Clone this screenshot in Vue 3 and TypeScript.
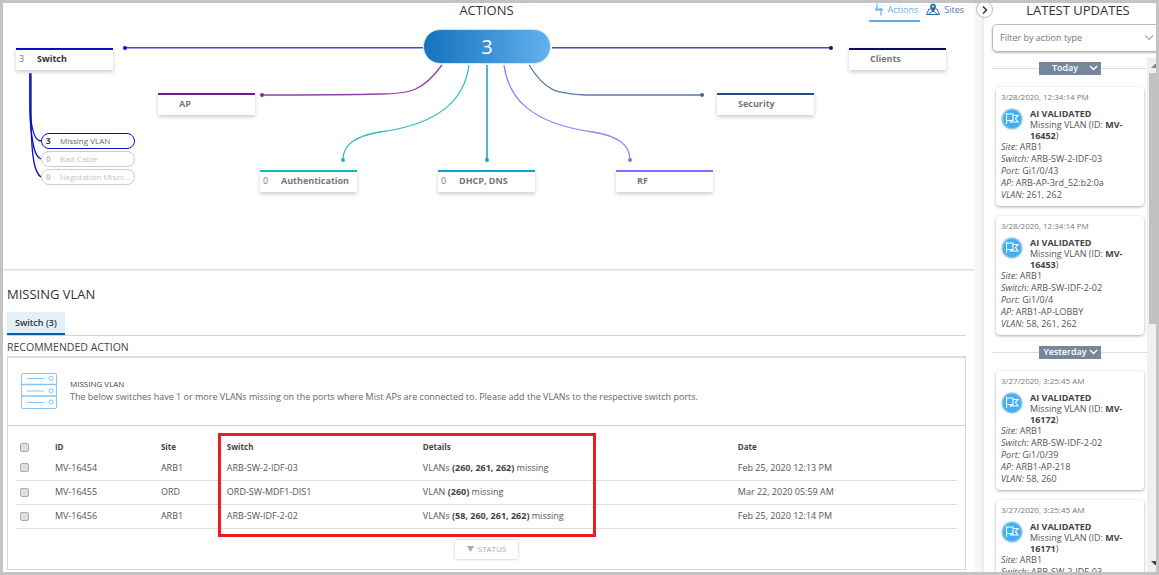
<script setup lang="ts">
import { ref } from 'vue'

interface DiagramNode {
  label: string
  count?: string
  x: number
  y: number
  color: string
  active?: boolean
}

interface SubIssue {
  label: string
  count: string
  y: number
  active?: boolean
}

interface Update {
  id: string
  time: string
  ticket: string
  site: string
  switchName: string
  port: string
  ap: string
  vlan: string
}

const CANVAS_WIDTH = 972

const nodes: DiagramNode[] = [
  { label: 'Switch', count: '3', x: 13, y: 45, color: '#0a10c0', active: true },
  { label: 'AP', x: 155, y: 90, color: '#6d1f8f' },
  { label: 'Authentication', count: '0', x: 257, y: 167, color: '#16b9b9' },
  { label: 'DHCP, DNS', count: '0', x: 435, y: 167, color: '#12a0c4' },
  { label: 'RF', x: 613, y: 167, color: '#7a74fb' },
  { label: 'Security', x: 714, y: 90, color: '#234f86' },
  { label: 'Clients', x: 846, y: 45, color: '#0b0b6e' },
]

const issues: SubIssue[] = [
  { label: 'Missing VLAN', count: '3', y: 130, active: true },
  { label: 'Bad Cable', count: '0', y: 148 },
  { label: 'Negotation Mism...', count: '0', y: 166 },
]

const place = (x: number, y: number) => ({ left: `${(x / CANVAS_WIDTH) * 100}%`, top: `${y}px` })

const columns = ['ID', 'Site', 'Switch', 'Details', 'Date']

const rows = [
  { id: 'MV-16454', site: 'ARB1', sw: 'ARB-SW-2-IDF-03', noun: 'VLANs', vlans: '(260, 261, 262)', date: 'Feb 25, 2020 12:13 PM' },
  { id: 'MV-16455', site: 'ORD', sw: 'ORD-SW-MDF1-DIS1', noun: 'VLAN', vlans: '(260)', date: 'Mar 22, 2020 05:59 AM' },
  { id: 'MV-16456', site: 'ARB1', sw: 'ARB-SW-IDF-2-02', noun: 'VLANs', vlans: '(58, 260, 261, 262)', date: 'Feb 25, 2020 12:14 PM' },
]

const days: { name: string; updates: Update[] }[] = [
  {
    name: 'Today',
    updates: [
      { id: 'a', time: '3/28/2020, 12:34:14 PM', ticket: 'MV-16452', site: 'ARB1', switchName: 'ARB-SW-2-IDF-03', port: 'Gi1/0/43', ap: 'ARB-AP-3rd_52:b2:0a', vlan: '261, 262' },
      { id: 'b', time: '3/28/2020, 12:34:14 PM', ticket: 'MV-16453', site: 'ARB1', switchName: 'ARB-SW-IDF-2-02', port: 'Gi1/0/4', ap: 'ARB1-AP-LOBBY', vlan: '58, 261, 262' },
    ],
  },
  {
    name: 'Yesterday',
    updates: [
      { id: 'c', time: '3/27/2020, 3:25:45 AM', ticket: 'MV-16172', site: 'ARB1', switchName: 'ARB-SW-IDF-2-02', port: 'Gi1/0/39', ap: 'ARB1-AP-218', vlan: '58, 260' },
      { id: 'd', time: '3/27/2020, 3:25:45 AM', ticket: 'MV-16171', site: 'ARB1', switchName: 'ARB-SW-2-IDF-03', port: 'Gi1/0/43', ap: 'ARB1-AP-218', vlan: '58, 260' },
    ],
  },
]

const picked = ref<string[]>([])
const filter = ref('')
</script>

<template>
  <div class="frame">
    <main class="main">
      <section class="diagram">
        <h1 class="title">ACTIONS</h1>
        <nav class="views">
          <a href="#actions" class="view current">
            <svg width="10" height="13" viewBox="0 0 10 13" fill="none" stroke="currentColor" stroke-width="1.200">
              <path d="M3 0.500V7.500M1 5.500L3 7.500L5 5.500M7 12.500V5.500M5 7.500L7 5.500L9 7.500" />
            </svg>
            Actions
          </a>
          <a href="#sites" class="view">
            <svg width="14" height="12" viewBox="0 0 14 12" fill="none" stroke="#1f6fb5" stroke-width="1">
              <path d="M4.500 6L3 6L0.500 11.500H13.500L11 6H9.500M2.500 11L7 8L11.500 11" />
              <path d="M7 9C5 6 4.500 5 4.500 3.500A2.500 2.500 0 0 1 9.500 3.500C9.500 5 9 6 7 9Z" fill="#1f6fb5" />
              <circle cx="7" cy="3.500" r="1" fill="#fff" stroke="none" />
            </svg>
            Sites
          </a>
        </nav>

        <svg class="wires" viewBox="0 0 972 264" preserveAspectRatio="none" fill="none" stroke-width="1.300">
          <path d="M122 44.800H420" stroke="#4247dc" stroke-width="1.600" />
          <path d="M549 44.800H828" stroke="#4d4ab0" stroke-width="1.600" />
          <path d="M439 62C420 88 407 91 377 91C340 92 300 92 259 92" stroke="#8a44a4" />
          <path d="M466 62C462 92 443 120 377 129C353 133 340 141 340 157" stroke="#2bbfbf" />
          <path d="M484 62V157" stroke="#12a0c4" stroke-width="1.500" />
          <path d="M501 62C505 92 524 120 590 129C614 133 627 141 627 157" stroke="#8a85fb" />
          <path d="M526 62C542 88 553 91 585 92H699" stroke="#5b7ba3" />
          <g stroke="#0a10c0">
            <path d="M27 70V104C28 126 31 138 38 138" />
            <path d="M27 70V114C29 142 32 154 38 156" />
            <path d="M28 70V122C29 158 32 170 38 174" />
          </g>
          <circle cx="122" cy="45" r="2" fill="#0a10c0" />
          <circle cx="828" cy="45" r="2" fill="#10106e" />
          <circle cx="259" cy="92" r="2" fill="#7a2f98" />
          <circle cx="340" cy="157" r="2" fill="#16b9b9" />
          <circle cx="484" cy="157" r="2" fill="#12a0c4" />
          <circle cx="627" cy="157" r="2" fill="#7a74fb" />
          <circle cx="699" cy="92" r="2" fill="#47658f" />
        </svg>

        <button class="total" type="button">3</button>

        <button
          v-for="node in nodes"
          :key="node.label"
          type="button"
          class="node"
          :class="{ active: node.active }"
          :style="{ ...place(node.x, node.y), borderTopColor: node.color }"
        >
          <span class="node-count">{{ node.count }}</span>
          <strong>{{ node.label }}</strong>
        </button>

        <button
          v-for="issue in issues"
          :key="issue.label"
          type="button"
          class="issue"
          :class="{ active: issue.active }"
          :style="place(38, issue.y)"
        >
          <strong class="issue-count">{{ issue.count }}</strong>
          <span>{{ issue.label }}</span>
        </button>
      </section>

      <section class="detail">
        <h2 class="subject">MISSING VLAN</h2>
        <div class="tabs">
          <button type="button" class="tab">Switch (3)</button>
        </div>
        <h3 class="caption">RECOMMENDED ACTION</h3>

        <div class="box">
          <div class="intro">
            <svg class="rack" width="36" height="36" viewBox="0 0 36 36" fill="none" stroke="#86c5f4" stroke-width="1">
              <rect x="0.500" y="0.500" width="35" height="35" rx="1" />
              <path d="M0 11.500H36M0 23H36" stroke-width="1.500" />
              <path d="M6 5.500H23M6 18H23M6 29.500H23" />
              <circle cx="30" cy="5.500" r="2" />
              <circle cx="30" cy="18" r="2" />
              <circle cx="30" cy="29" r="2" />
            </svg>
            <div>
              <h4 class="intro-title">MISSING VLAN</h4>
              <p class="intro-text">
                The below switches have 1 or more VLANs missing on the ports where Mist APs are connected to. Please add the VLANs to the respective switch ports.
              </p>
            </div>
          </div>

          <div class="table-wrap">
            <table>
              <colgroup>
                <col class="c-check" />
                <col class="c-id" />
                <col class="c-site" />
                <col class="c-switch" />
                <col class="c-details" />
                <col />
              </colgroup>
              <thead>
                <tr>
                  <th><input type="checkbox" aria-label="Select all" /></th>
                  <th v-for="c in columns" :key="c">{{ c }}</th>
                </tr>
              </thead>
              <tbody>
                <tr v-for="row in rows" :key="row.id">
                  <td><input v-model="picked" type="checkbox" :value="row.id" :aria-label="row.id" /></td>
                  <td>{{ row.id }}</td>
                  <td>{{ row.site }}</td>
                  <td>{{ row.sw }}</td>
                  <td>{{ row.noun }} <b>{{ row.vlans }}</b> missing</td>
                  <td>{{ row.date }}</td>
                </tr>
              </tbody>
            </table>
            <div class="highlight"></div>
          </div>

          <button type="button" class="status">
            <svg width="7" height="6" viewBox="0 0 7 6"><path d="M0 0H7L3.500 6Z" fill="#aaa" /></svg>
            STATUS
          </button>
        </div>
      </section>
    </main>

    <div class="splitter">
      <button type="button" class="collapse" aria-label="Collapse updates">
        <svg width="6" height="8" viewBox="0 0 6 8" fill="none" stroke="#333" stroke-width="1.500"><path d="M1 0.500L4.500 4L1 7.500" /></svg>
      </button>
    </div>

    <aside class="side">
      <h2 class="title">LATEST UPDATES</h2>
      <div class="filter">
        <select v-model="filter" aria-label="Filter by action type">
          <option value="">Filter by action type</option>
        </select>
        <svg width="10" height="6" viewBox="0 0 10 6" fill="none" stroke="#aaa" stroke-width="1.200"><path d="M1 0.500L5 4.500L9 0.500" /></svg>
      </div>

      <div class="feed">
        <div class="feed-list">
          <section v-for="day in days" :key="day.name" class="day">
            <div class="day-bar">
              <button type="button" class="day-name">
                <span>{{ day.name }}</span>
                <svg width="9" height="6" viewBox="0 0 9 6" fill="none" stroke="#fff" stroke-width="1.500"><path d="M1 1L4.500 4.500L8 1" /></svg>
              </button>
            </div>
            <article v-for="u in day.updates" :key="u.id" class="card">
              <time class="card-time">{{ u.time }}</time>
              <div class="card-head">
                <svg width="22" height="22" viewBox="0 0 22 22" fill="none">
                  <circle cx="11" cy="11" r="10" fill="#3fb0f5" stroke="#9fcbe2" stroke-width="1.500" />
                  <path d="M5.500 5V16M5.500 6H12V12.500H5.500M12 7.500H17L14.500 10.500L17 14H9.500L12 12" stroke="#fff" stroke-width="1.100" />
                </svg>
                <p>
                  <strong>AI VALIDATED</strong><br />
                  Missing VLAN (ID: <strong>{{ u.ticket }}</strong>)
                </p>
              </div>
              <ul>
                <li><i>Site:</i> {{ u.site }}</li>
                <li><i>Switch:</i> {{ u.switchName }}</li>
                <li><i>Port:</i> {{ u.port }}</li>
                <li><i>AP:</i> {{ u.ap }}</li>
                <li><i>VLAN:</i> {{ u.vlan }}</li>
              </ul>
            </article>
          </section>
        </div>
        <div class="scrollbar">
          <svg width="5" height="4" viewBox="0 0 5 4"><path d="M0 4L4 0H5V4Z" fill="#888" /></svg>
          <div class="thumb"></div>
          <svg width="5" height="4" viewBox="0 0 5 4"><path d="M0 0H5V4H4Z" fill="#444" /></svg>
        </div>
      </div>
    </aside>
  </div>
</template>

<style>
html,
body,
#app {
  height: 100%;
}
body {
  margin: 0;
  overflow: hidden;
}
</style>

<style scoped>
* {
  box-sizing: border-box;
}
.frame {
  display: grid;
  grid-template-columns: 1fr 9px 172px;
  grid-template-rows: 100%;
  height: 100%;
  border: 3px solid #c3c3c3;
  background: #fff;
  color: #555;
  font: 9px/12px "Open Sans", "Noto Sans", sans-serif;
  overflow: hidden;
}
h1,
h2,
h3,
h4,
p,
ul {
  margin: 0;
  padding: 0;
  font-weight: 400;
}
button {
  margin: 0;
  padding: 0;
  border: 0;
  background: none;
  color: inherit;
  font: inherit;
}
svg {
  flex: none;
}
.title {
  color: #333;
  font-size: 13px;
  line-height: 15px;
  text-align: center;
}
.main {
  display: flex;
  flex-direction: column;
  min-width: 0;
  overflow: hidden;
}
.diagram {
  position: relative;
  flex: none;
  height: 266px;
  box-shadow: 0 1px 2px #ccc;
}
.diagram .title {
  padding-right: 5px;
}
.views {
  position: absolute;
  top: 0;
  right: 9px;
  display: flex;
  gap: 4px;
}
.view {
  display: flex;
  gap: 4px;
  height: 19px;
  padding: 0 2px;
  color: #4a7db8;
  line-height: 13px;
  text-decoration: none;
}
.view.current {
  padding-left: 5px;
  border-bottom: 2px solid #5aaeea;
  color: #64b0e8;
}
.wires {
  position: absolute;
  top: 0;
  left: 0;
  width: 100%;
  height: 264px;
}
.total {
  position: absolute;
  top: 26px;
  left: 43.200%;
  width: 128px;
  height: 35px;
  border: 1px solid #cfe6f9;
  border-radius: 18px;
  background: linear-gradient(90deg, #1472bc, #62b1ed) border-box;
  color: #fff;
  font-size: 20px;
  line-height: 30px;
}
.node {
  position: absolute;
  display: flex;
  align-items: center;
  width: 97px;
  height: 22px;
  padding: 0 3px 2px;
  border-top: 2px solid;
  background: #fff;
  box-shadow: 0 2px 4px #ccc;
  color: #777;
}
.node.active strong {
  color: #333;
}
.node-count {
  width: 18px;
  text-align: left;
}
.issue {
  position: absolute;
  display: flex;
  align-items: center;
  width: 94px;
  height: 16px;
  padding: 0 4px;
  border: 1px solid #ccc;
  border-radius: 8px;
  background: #fff;
  color: #c4c4c4;
  font-size: 8px;
  white-space: nowrap;
}
.issue.active {
  border-color: #0a10c0;
  color: #666;
}
.issue.active strong {
  color: #333;
}
.issue-count {
  width: 14px;
  text-align: left;
}
.detail {
  display: flex;
  flex: 1;
  flex-direction: column;
  min-height: 0;
  padding: 16px 9px 2px 4px;
}
.subject {
  color: #333;
  font-size: 13px;
  line-height: 18px;
}
.tabs {
  display: flex;
  margin-top: 9px;
  border-bottom: 1px solid #c5d8e6;
}
.tab {
  height: 23px;
  padding: 0 8px;
  border-bottom: 2px solid #0b5cad;
  background: #e4f0f8;
  color: #333;
  font-weight: 600;
}
.caption {
  margin-top: 4px;
  color: #444;
  line-height: 14px;
}
.box {
  display: flex;
  flex: 1;
  flex-direction: column;
  min-height: 0;
  margin-top: 2px;
  border: 1px solid #cfd9e2;
  border-top: 2px solid #ddd;
}
.intro {
  display: flex;
  gap: 13px;
  height: 68px;
  padding: 15px 13px 0;
  border-bottom: 1px solid #ccc;
}
.intro-title {
  margin-top: 5px;
  color: #444;
  font-size: 8px;
}
.intro-text {
  color: #666;
  line-height: 14px;
}
.table-wrap {
  position: relative;
  margin: 12px 8px 0;
}
table {
  width: 100%;
  border-collapse: collapse;
  table-layout: fixed;
}
.c-check {
  width: 4.140%;
}
.c-id {
  width: 11.260%;
}
.c-site {
  width: 7.010%;
}
.c-switch {
  width: 20.830%;
}
.c-details {
  width: 33.470%;
}
th,
td {
  height: 24px;
  padding: 0;
  border-bottom: 1px solid #ddd;
  text-align: left;
}
th {
  height: 18px;
  border: 0;
  color: #444;
  font-size: 8px;
}
td b {
  color: #444;
}
input[type="checkbox"] {
  display: block;
  width: 9px;
  height: 9px;
  margin: 0 0 0 4px;
  border: 1px solid #aaa;
  border-radius: 2px;
  background: #ddd;
  appearance: none;
}
.highlight {
  position: absolute;
  top: -5px;
  left: 21.470%;
  width: 40.170%;
  height: 104px;
  border: 3px solid #ed1c24;
  pointer-events: none;
}
.status {
  display: flex;
  gap: 4px;
  align-items: center;
  justify-content: center;
  align-self: center;
  width: 63px;
  height: 19px;
  margin-top: 11px;
  border-radius: 2px;
  box-shadow: 0 0 3px #bbb;
  color: #aaa;
  font-size: 8px;
}
.splitter {
  position: relative;
  border-right: 2px solid #eee;
  background: #f6f6f6;
}
.collapse {
  position: absolute;
  top: -2px;
  left: 1px;
  display: flex;
  align-items: center;
  justify-content: center;
  width: 17px;
  height: 17px;
  border: 1px solid #bbb;
  border-radius: 50%;
  background: #fff;
}
.side {
  display: flex;
  flex-direction: column;
  min-width: 0;
  overflow: hidden;
}
.side .title {
  padding-left: 16px;
}
.filter {
  position: relative;
  display: flex;
  flex: none;
  align-items: center;
  height: 28px;
  margin: 6px -8px 0 8px;
  border: 1px solid #bbb;
  border-radius: 5px;
  box-shadow: 0 1px 2px #bbb;
}
.filter select {
  flex: 1;
  height: 26px;
  padding: 0 7px;
  border: 0;
  background: none;
  color: #777;
  font: inherit;
  appearance: none;
}
.filter svg {
  position: absolute;
  right: 9px;
}
.feed {
  display: flex;
  flex: 1;
  min-height: 0;
  margin-top: 5px;
}
.feed-list {
  flex: 1;
  padding-left: 8px;
  overflow: hidden;
}
.day-bar {
  display: flex;
  align-items: center;
  height: 22px;
}
.day-bar::before,
.day-bar::after {
  flex: 1;
  height: 1px;
  background: #ddd;
  content: "";
}
.day-name {
  display: flex;
  align-items: center;
  justify-content: space-between;
  width: 62px;
  height: 13px;
  padding: 0 3px;
  background: #74879b;
  color: #fff;
  font-weight: 600;
}
.day-name span {
  flex: 1;
  text-align: center;
}
.card {
  margin: 0 3px 10px 4px;
  padding: 4px 5px 5px;
  border-radius: 4px;
  box-shadow: 0 1px 3px #aaa;
}
.day-bar + .card {
  margin-top: 8px;
}
.day + .day {
  margin-top: -4px;
}
.card-time {
  display: block;
  color: #777;
  font-size: 8px;
}
.card-head {
  display: flex;
  gap: 7px;
  margin-top: 5px;
}
.card-head p {
  line-height: 11px;
}
.card-head strong {
  color: #444;
}
ul {
  list-style: none;
}
.scrollbar {
  display: flex;
  flex: none;
  flex-direction: column;
  align-items: flex-end;
  width: 9px;
  padding: 7px 0;
  background: #f0f0f0;
}
.thumb {
  width: 7px;
  height: 50%;
  margin: 5px 0 auto;
  background: #c1c1c1;
}
</style>
